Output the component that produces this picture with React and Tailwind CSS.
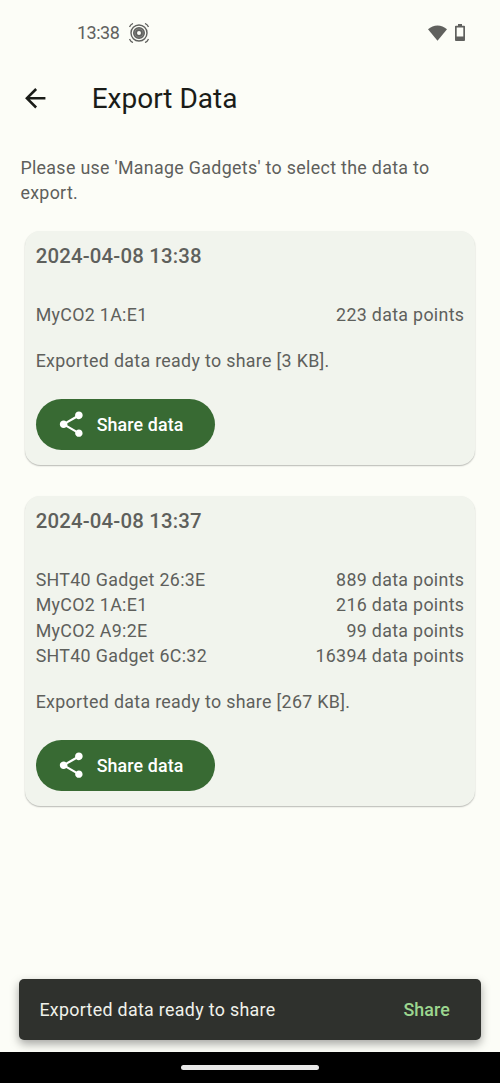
import React from "react";

const exportsList = [
  {
    time: "2024-04-08 13:38",
    size: "3 KB",
    gadgets: [{ name: "MyCO2 1A:E1", points: 223 }],
  },
  {
    time: "2024-04-08 13:37",
    size: "267 KB",
    gadgets: [
      { name: "SHT40 Gadget 26:3E", points: 889 },
      { name: "MyCO2 1A:E1", points: 216 },
      { name: "MyCO2 A9:2E", points: 99 },
      { name: "SHT40 Gadget 6C:32", points: 16394 },
    ],
  },
];

function StatusBar() {
  return (
    <header className="flex h-[65px] shrink-0 items-center pl-[77px] pr-[35.3px] text-[#60615e]">
      <span className="w-[43px] text-[18px] font-[450] tracking-[-0.5px]">13:38</span>
      <svg className="ml-[9px] size-5" viewBox="0 0 20 20" fill="none" stroke="currentColor">
        <circle cx="10" cy="10" r="8" strokeWidth="1.4" />
        <circle cx="10" cy="10" r="4" strokeWidth="4" />
        <circle cx="10" cy="10" r="4.1" strokeWidth="0.4" stroke="#b5b6b2" />
        <path d="M.5 4Q1.5 1.5 4 .5M16 .5Q18.5 1.5 19.5 4M19.5 16Q18.5 18.5 16 19.5M4 19.5Q1.5 18.5.5 16" strokeWidth="1.3" />
      </svg>
      <svg className="ml-auto h-4 w-[19px]" viewBox="0 0 19 16" fill="currentColor">
        <path d="M0 4.2C5.4-.9 13.6-.9 19 4.2L9.5 15.7Z" />
      </svg>
      <svg className="ml-2 h-[17px] w-[10px]" viewBox="0 0 10 17" fill="currentColor" fillRule="evenodd">
        <path d="M3 0h4v1.7h2.1a.9.9 0 0 1 .9.9v13.5a.9.9 0 0 1-.9.9H.9a.9.9 0 0 1-.9-.9V2.6a.9.9 0 0 1 .9-.9H3ZM1.7 3.4v9h6.6v-9Z" />
      </svg>
    </header>
  );
}

function ShareButton() {
  return (
    <button className="mt-[25.5px] flex h-[51px] w-[179.5px] items-center rounded-full bg-[#386a33] pl-5 text-white">
      <svg className="size-[30.5px]" viewBox="0 0 24 24" fill="currentColor">
        <path d="M18 16.08c-.76 0-1.44.3-1.96.77L8.91 12.7c.05-.23.09-.46.09-.7s-.04-.47-.09-.7l7.05-4.11c.54.5 1.25.81 2.04.81 1.66 0 3-1.34 3-3s-1.34-3-3-3-3 1.34-3 3c0 .24.04.47.09.7L8.04 9.81C7.5 9.31 6.79 9 6 9c-1.66 0-3 1.34-3 3s1.34 3 3 3c.79 0 1.5-.31 2.04-.81l7.12 4.16c-.05.21-.08.43-.08.65 0 1.61 1.31 2.92 2.92 2.92s2.92-1.31 2.92-2.92-1.31-2.92-2.92-2.92z" />
      </svg>
      <span className="ml-[10.5px] pt-px text-[17.82px] font-medium tracking-[0.13px]">Share data</span>
    </button>
  );
}

function ExportCard({ entry }) {
  return (
    <section className="rounded-[15.3px] bg-[#f1f4ed] px-[10.2px] pt-[9.7px] pb-[15px] shadow-[0_1px_1.5px_rgba(0,0,0,0.27)]">
      <h2 className="text-[20.36px] leading-[30.5px] font-medium tracking-[0.19px]">{entry.time}</h2>
      <ul className="mt-[30.5px]">
        {entry.gadgets.map((g) => (
          <li key={g.name} className="flex justify-between">
            <span>{g.name}</span>
            <span>{g.points} data points</span>
          </li>
        ))}
      </ul>
      <p className="mt-[20.2px]">Exported data ready to share [{entry.size}].</p>
      <ShareButton />
    </section>
  );
}

export default function App() {
  return (
    <div className="flex h-[1083px] w-[500px] flex-col overflow-hidden bg-[#fcfdf7] font-[Roboto,sans-serif] text-[17.82px] leading-[25.5px] tracking-[0.32px] text-[#5e605c]">
      <StatusBar />
      <div className="flex h-[67px] shrink-0 items-center pl-[20.4px] text-[#1a1c18]">
        <svg className="size-[30.5px]" viewBox="0 0 24 24" fill="currentColor">
          <path d="M20 11H7.83l5.59-5.59L12 4l-8 8 8 8 1.41-1.41L7.83 13H20v-2z" />
        </svg>
        <h1 className="ml-[40.8px] text-[28px] leading-9 tracking-normal">Export Data</h1>
      </div>
      <main className="flex-1 px-[20.4px] pt-[22.7px]">
        <p>Please use 'Manage Gadgets' to select the data to export.</p>
        <div className="mt-[25.5px] flex flex-col gap-[31.4px] px-[5.1px]">
          {exportsList.map((entry) => (
            <ExportCard key={entry.time} entry={entry} />
          ))}
        </div>
      </main>
      <div className="mx-[19px] mb-[12px] flex h-[61px] shrink-0 items-center justify-between rounded-[5px] bg-[#2f312d] pr-[31px] pl-[20.4px] text-[#f0f1eb] shadow-[0_4px_10px_rgba(0,0,0,0.35)]">
        <span>Exported data ready to share</span>
        <button className="font-medium tracking-[0.13px] text-[#9cd68f]">Share</button>
      </div>
      <footer className="flex h-[31px] shrink-0 items-center justify-center bg-black">
        <div className="h-[5px] w-[138px] rounded-full bg-[#e8e8e8]" />
      </footer>
    </div>
  );
}
